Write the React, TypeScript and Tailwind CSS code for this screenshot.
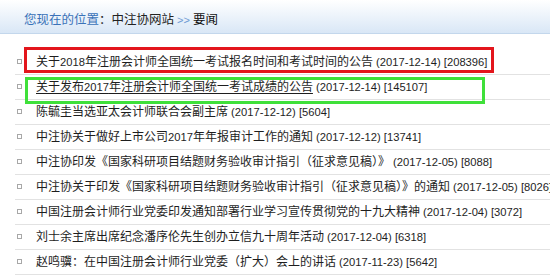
const FONT = "font-['Liberation_Sans','Noto_Sans_CJK_SC',sans-serif]";

type NewsItem = {
  title: string;
  date: string;
  hits: number;
  active?: boolean;
};

const NEWS: NewsItem[] = [
  { title: '关于2018年注册会计师全国统一考试报名时间和考试时间的公告', date: '2017-12-14', hits: 208396 },
  { title: '关于发布2017年注册会计师全国统一考试成绩的公告', date: '2017-12-14', hits: 145107, active: true },
  { title: '陈毓圭当选亚太会计师联合会副主席', date: '2017-12-12', hits: 5604 },
  { title: '中注协关于做好上市公司2017年年报审计工作的通知', date: '2017-12-12', hits: 13741 },
  { title: '中注协印发《国家科研项目结题财务验收审计指引（征求意见稿）》', date: '2017-12-05', hits: 8088 },
  { title: '中注协关于印发《国家科研项目结题财务验收审计指引（征求意见稿）》的通知', date: '2017-12-05', hits: 8026 },
  { title: '中国注册会计师行业党委印发通知部署行业学习宣传贯彻党的十九大精神', date: '2017-12-04', hits: 3072 },
  { title: '刘士余主席出席纪念潘序伦先生创办立信九十周年活动', date: '2017-12-04', hits: 6318 },
  { title: '赵鸣骥：在中国注册会计师行业党委（扩大）会上的讲话', date: '2017-11-23', hits: 5642 },
];

// latin runs are set a touch smaller so they sit like the narrow system font
function Mixed({ text }: { text: string }) {
  const parts = text.split(/([\x20-\x7e]+)/);
  return (
    <>
      {parts.map((p, i) =>
        i % 2 === 1 ? (
          <span key={i} className="text-[11.2px]">
            {p}
          </span>
        ) : (
          p
        )
      )}
    </>
  );
}

export default function App() {
  return (
    <div className={`w-[550px] h-[276px] overflow-hidden bg-white text-[12px] text-[#1e1e1e] ${FONT}`}>
      {/* breadcrumb bar */}
      <div className="h-[34px] flex items-center pl-[24px] pt-[7px] text-[12.5px] bg-gradient-to-b from-[#ffffff] to-[#d9e7f6] border-b border-[#c3d7ec]">
        <span className="text-[#3a72b8]">您现在的位置</span>
        <span className="text-[#222]">：中注协网站</span>
        <span className="text-[#6f9bd4] mx-[3px] text-[11px]">&gt;&gt;</span>
        <span className="text-[#111]">要闻</span>
      </div>

      {/* news list */}
      <ul className="mt-[16px] ml-[15px]">
        {NEWS.map((item, i) => (
          <li
            key={i}
            className="relative h-[25px] flex items-center border-b border-[#e2e2e2] whitespace-nowrap"
          >
            <span className="w-[5px] h-[5px] ml-[2px] mr-[14px] -mt-[2px] border border-[#a8a8a8] bg-white shrink-0" />
            <span className={item.active ? 'underline underline-offset-2' : ''}>
              <Mixed text={item.title} />
            </span>
            <span className="text-[11.2px]">&nbsp;({item.date}) [{item.hits}]</span>

            {i === 0 && (
              <div className="absolute left-[9px] top-[-3px] w-[470px] h-[26px] border-[3px] border-[#e3161c] pointer-events-none" />
            )}
            {i === 1 && (
              <div className="absolute left-[10px] top-[2px] w-[460px] h-[27px] border-[3px] border-[#3fe03a] pointer-events-none" />
            )}
          </li>
        ))}
      </ul>
    </div>
  );
}
